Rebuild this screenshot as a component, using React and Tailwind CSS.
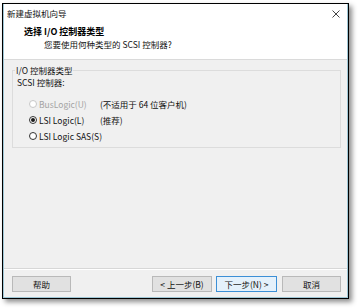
import React from "react";

const font = { fontFamily: '"Noto Sans CJK SC", "Noto Sans", sans-serif' };

function Radio({ checked, disabled }) {
  return (
    <span
      className={`relative inline-flex h-[8px] w-[8px] shrink-0 items-center justify-center rounded-full border bg-white ${
        disabled ? "border-[#c8c8c8]" : "border-[#333333]"
      }`}
    >
      {checked && <span className="h-[4px] w-[4px] rounded-full bg-[#1a1a1a]" />}
    </span>
  );
}

function Btn({ children, w, primary }) {
  return (
    <div
      className={`flex h-[16px] items-center justify-center whitespace-nowrap border text-[8.5px] leading-none text-[#111] ${w} ${
        primary ? "border-[#3c8fd6] bg-[#e5f1fb]" : "border-[#b9b9b9] bg-[#e1e1e1]"
      }`}
    >
      {children}
    </div>
  );
}

export default function App() {
  return (
    <div className="h-[308px] w-[358px] overflow-hidden bg-white pl-[2px] pt-[3px]" style={font}>
      <div className="h-[296px] w-[347px] border border-black shadow-[3px_3px_5px_rgba(0,0,0,0.45)]">
        <div className="flex h-full flex-col border-x border-b border-[#9fc7d6]">
          {/* header */}
          <div className="flex h-[56px] shrink-0 flex-col border-b border-[#dadada] bg-white">
            <div className="flex h-[19px] items-center justify-between pl-[3px] pr-[7px]">
              <span className="text-[8.5px] leading-none text-[#111]">新建虚拟机向导</span>
              <svg width="8" height="8" viewBox="0 0 8 8" className="text-[#444]">
                <path d="M0.5 0.5 L7.5 7.5 M7.5 0.5 L0.5 7.5" stroke="currentColor" strokeWidth="1" fill="none" />
              </svg>
            </div>
            <div className="mt-[2px] flex h-[13px] items-center pl-[20px]">
              <span className="text-[9px] font-bold leading-none text-[#000]">选择 I/O 控制器类型</span>
            </div>
            <div className="flex h-[12px] items-center pl-[40px]">
              <span className="text-[8.5px] leading-none text-[#111]">您要使用何种类型的 SCSI 控制器?</span>
            </div>
          </div>

          {/* body */}
          <div className="flex flex-1 flex-col bg-[#f0f0f0]">
            <div className="relative ml-[8px] mr-[6px] mt-[10px] h-[78px] border border-[#dcdcdc]">
              <span className="absolute left-[2px] top-[-7px] bg-[#f0f0f0] px-[1px] text-[8.5px] leading-[12px] text-[#111]">
                I/O 控制器类型
              </span>
              <div className="flex flex-col pt-[5px]">
                <div className="flex h-[12px] items-center pl-[4px] text-[8.5px] leading-none text-[#111]">
                  SCSI 控制器:
                </div>
                <div className="mt-[8px] grid grid-cols-[71px_1fr] whitespace-nowrap pl-[16px] text-[8.5px] leading-none">
                  <div className="flex h-[16px] items-center gap-[2px] text-[#a3a3a3]">
                    <Radio disabled />
                    <span>BusLogic(U)</span>
                  </div>
                  <div className="flex h-[16px] items-center text-[#111]">(不适用于 64 位客户机)</div>
                  <div className="flex h-[16px] items-center gap-[2px] text-[#111]">
                    <Radio checked />
                    <span>LSI Logic(L)</span>
                  </div>
                  <div className="flex h-[16px] items-center text-[#111]">(推荐)</div>
                  <div className="col-span-2 flex h-[16px] items-center gap-[2px] text-[#111]">
                    <Radio />
                    <span>LSI Logic SAS(S)</span>
                  </div>
                </div>
              </div>
            </div>
            <div className="flex-1" />
            <div className="flex h-[29px] shrink-0 items-start border-t border-[#d7d7d7] pl-[8px] pr-[6px] pt-[7px] shadow-[inset_0_1px_0_#ffffff]">
              <Btn w="w-[59px]">帮助</Btn>
              <div className="ml-auto flex">
                <Btn w="w-[60px]">&lt; 上一步(B)</Btn>
                <div className="w-[4px]" />
                <Btn w="w-[61px]" primary>下一步(N) &gt;</Btn>
                <div className="w-[5px]" />
                <Btn w="w-[59px]">取消</Btn>
              </div>
            </div>
          </div>
        </div>
      </div>
    </div>
  );
}
